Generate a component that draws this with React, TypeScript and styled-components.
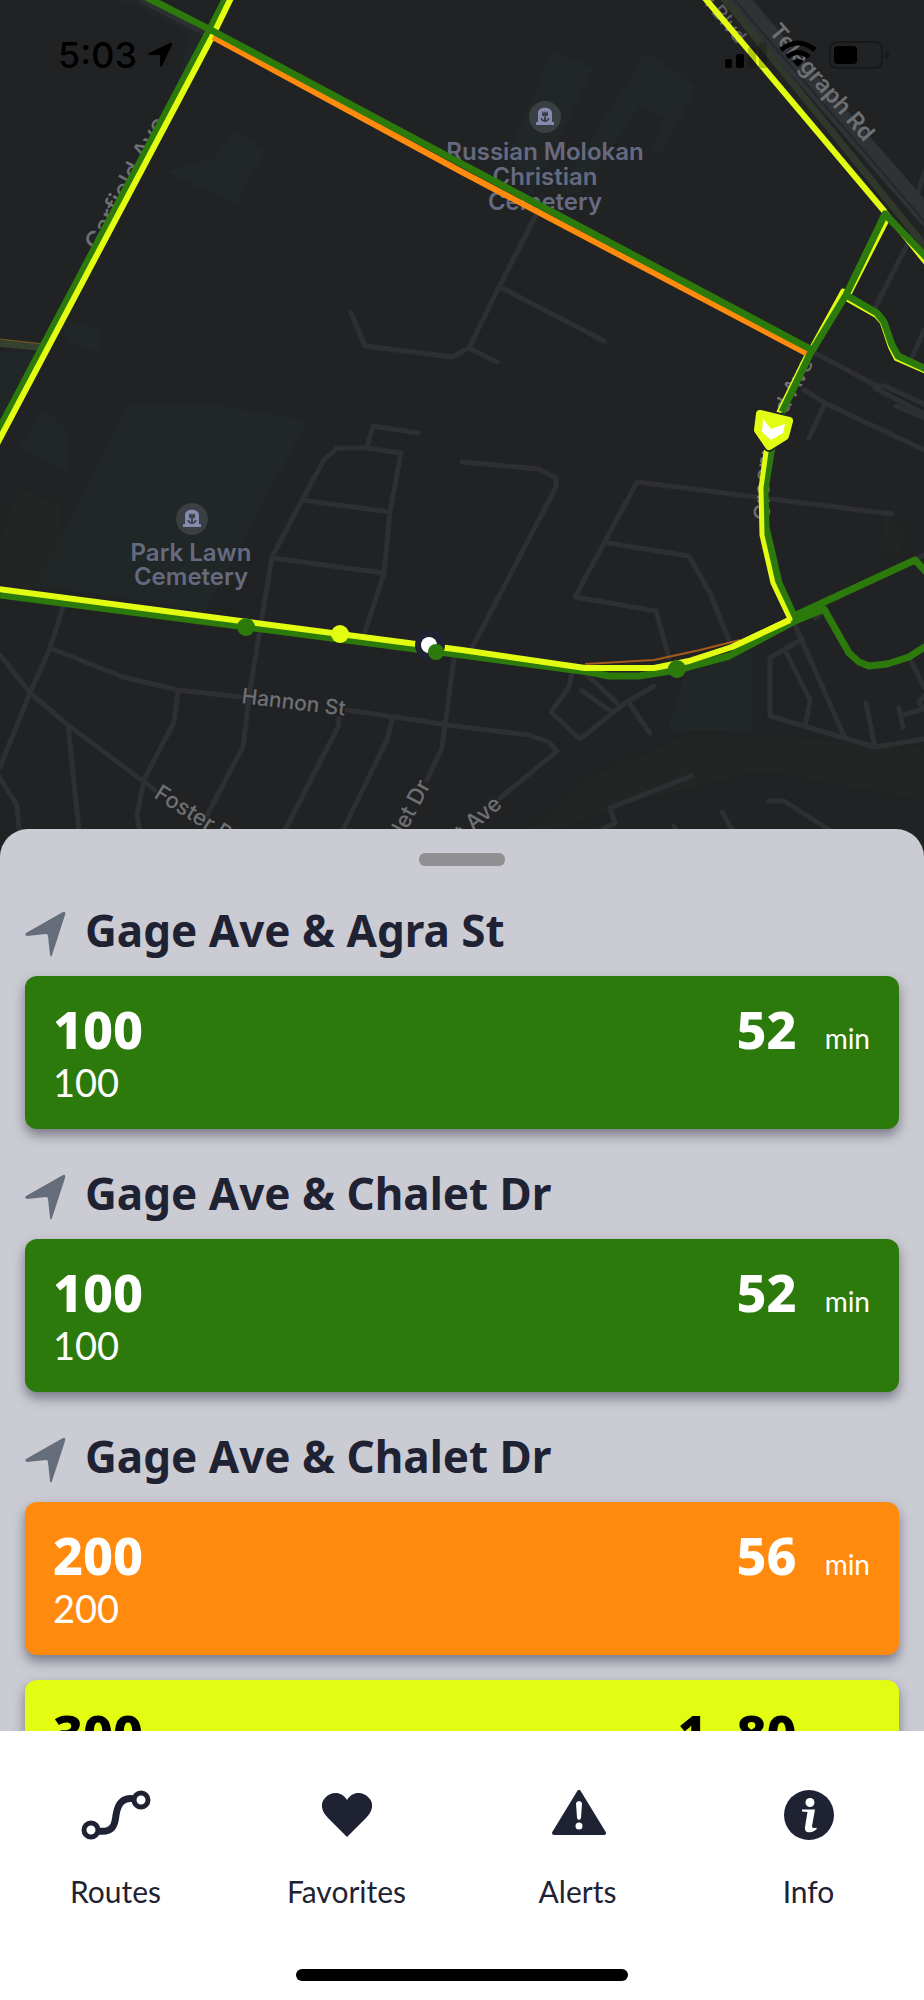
import React from "react";
import styled, { createGlobalStyle } from "styled-components";

const color = {
  ink: "#1f2233",
  sheet: "#cbcbd3",
  green: "#2d7a0c",
  orange: "#ff8a0d",
  yellow: "#e2fd12",
  arrow: "#666d7a",
};

const heavyFont = `"Noto Sans", Lato, sans-serif`;

const GlobalStyle = createGlobalStyle`
  *, *::before, *::after { box-sizing: border-box; }
  body { margin: 0; background: #212224; }
  button { font: inherit; color: inherit; border: 0; background: none; cursor: pointer; }
`;

const Screen = styled.div`
  display: flex;
  flex-direction: column;
  height: 100vh;
  font-family: Lato, "Liberation Sans", sans-serif;
  color: ${color.ink};
`;

const Stage = styled.main`
  position: relative;
  flex: 1;
  min-height: 0;
  display: grid;
  grid-template-rows: minmax(0, 829fr) minmax(0, 902fr);
`;

const MapLayer = styled.svg`
  position: absolute;
  top: 0;
  left: 0;
  width: 100%;
  height: 50%;
  background: #212224;
  font-family: Inter, Roboto, sans-serif;
`;

const StatusBar = styled.header`
  position: relative;
  display: flex;
  justify-content: space-between;
  align-items: flex-start;
  padding: 34px 34px 0 58px;
  color: #000;
`;

const StatusGroup = styled.div`
  display: flex;
  align-items: center;
  gap: 10px;
  height: 42px;
`;

const Clock = styled.time`
  font-family: Inter, Roboto, sans-serif;
  font-size: 36px;
  font-weight: 500;
  line-height: 42px;
`;

const Sheet = styled.section`
  position: relative;
  overflow: hidden;
  padding: 24px 25px 0;
  background: ${color.sheet};
  border-radius: 28px 28px 0 0;
`;

const Handle = styled.button`
  display: block;
  width: 86px;
  height: 13px;
  margin: 0 auto;
  padding: 0;
  && { background: #909093; }
  border-radius: 6px;
`;

const StopHeading = styled.header`
  display: flex;
  align-items: flex-end;
  gap: 19px;
  margin: 37px 0 19px;
`;

const StopName = styled.h2`
  margin: 0;
  font-family: ${heavyFont};
  font-size: 44px;
  font-weight: 700;
  line-height: 54px;
`;

const CardList = styled.div`
  display: grid;
  gap: 25px;
`;

const Card = styled.button<{ $fill: string; $text: string }>`
  display: block;
  width: 100%;
  padding: 23px 29px 24px 28px;
  text-align: left;
  border-radius: 12px;
  && {
    background: ${(p) => p.$fill};
    color: ${(p) => p.$text};
  }
  box-shadow: 0 6px 12px rgba(40, 42, 60, 0.5);
`;

const CardTop = styled.span`
  display: flex;
  align-items: baseline;
  justify-content: space-between;
`;

const Big = styled.span`
  font-family: ${heavyFont};
  font-size: 52px;
  font-weight: 800;
  line-height: 60px;
`;

const Eta = styled.span`
  display: flex;
  align-items: baseline;
  gap: 28px;
`;

const Unit = styled.span`
  font-size: 28px;
  line-height: 36px;
`;

const Headsign = styled.span`
  display: block;
  font-size: 38px;
  line-height: 46px;
`;

const BottomBar = styled.footer`
  position: relative;
  padding: 59px 0 19px;
  background: #fff;
`;

const Tabs = styled.nav`
  display: grid;
  grid-template-columns: repeat(4, 1fr);
`;

const Tab = styled.button`
  display: flex;
  flex-direction: column;
  align-items: center;
  gap: 33px;
  padding: 0;
`;

const TabLabel = styled.span`
  font-size: 30px;
  line-height: 36px;
`;

const HomeIndicator = styled.div`
  width: 36%;
  height: 12px;
  margin: 60px auto 0;
  border-radius: 6px;
  background: #000;
`;

const PARKS = [
  "M128 402L210 404L175 604L36 586Z",
  "M210 404L308 420L205 612L120 598Z",
  "M0 352L36 353L10 400L0 420Z",
  "M20 448L42 408L68 432L67 472Z",
  "M165 172L214 158L232 130L266 150L236 204Z",
  "M120 0L145 0L206 34L172 100L190 34Z",
  "M60 318L102 330L97 352L66 342Z",
  "M552 50L594 68L530 195L510 150Z",
  "M645 53L666 64L696 88L662 154L652 150L664 116L640 106L580 195L560 190Z",
  "M690 655L753 652L753 730L668 730Z",
];

const GROUNDS = [
  "M520 840L590 778L690 735L780 736L924 750V800L760 770L640 800Z",
  "M20 490L60 505L64 590L0 584V540Z",
  "M885 516L905 530L900 556L878 550Z",
];

const ROADS = [
  "M351 313L365 346L452 357L469 348L499 287L537 213",
  "M500 287L604 341M469 348L497 362",
  "M815 353L877 386L885 386L924 404M875 388L924 414",
  "M804 390L825 403L924 450M825 403L809 438M896 406L924 418",
  "M912 235L875 308M924 330L912 358",
  "M418 433L373 426L367 447",
  "M365 632L384 573L390 512L401 453L367 448H337L324 460L302 500L272 557L250 690L243 747L207 815",
  "M302 500L390 512M272 558L384 573",
  "M63 607L50 648L30 693L0 767",
  "M50 648L123 677L178 690L240 697M347 710L462 727L529 735L549 742L557 751L500 798",
  "M0 655L30 693L68 725L155 790M68 725L80 840M0 778L17 805L20 840",
  "M178 692L174 722L144 780L137 815L141 840",
  "M339 718L338 727L280 840M392 720L387 740L338 840M454 658L442 748L427 780",
  "M462 462L539 469L556 478V487L472 648",
  "M892 514L637 482L575 597L656 611L669 658",
  "M608 543L689 556L710 593L730 643",
  "M572 673L569 687L551 712L580 739L625 703L654 686",
  "M587 675L617 703M582 691L612 712M629 703L650 733",
  "M795 625L845 738M802 639L770 658V716L875 747L924 739",
  "M785 650L810 700L805 727M866 703L875 747",
  "M899 708L903 727M903 715L924 709L919 702L924 696M909 657L924 687",
  "M691 776L610 808L615 823L590 836",
  "M769 801H784L845 840M722 812L738 840M674 826L680 840",
  "M750 0L867 140L917 197L924 205M917 197L924 173",
  "M826 610L815 618M915 560L924 555",
];

const Cemetery = ({ x, y }: { x: number; y: number }) => (
  <g transform={`translate(${x} ${y})`}>
    <circle r="16" fill="#3b3f43" />
    <path d="M-9 8V5H-7V-4C-7 -11 7 -11 7 -4V5H9V8Z" fill="#858aae" />
    <path
      d="M-3 -6L-1 -4L0 -6L1 -4L3 -6V-2C3 0 -3 0 -3 -2ZM-1 0H1V5H-1Z"
      fill="#3b3f43"
    />
    <path d="M-4 1C-3 4 -1 4 0 4C1 4 3 4 4 1" fill="none" stroke="#3b3f43" strokeWidth="1.5" />
  </g>
);

const TransitMap = () => (
  <MapLayer viewBox="0 0 924 866" preserveAspectRatio="xMidYMin slice" role="img" aria-label="Transit map">
    {GROUNDS.map((d) => (
      <path key={d} d={d} fill="#222524" />
    ))}
    {PARKS.map((d) => (
      <path key={d} d={d} fill="#212626" />
    ))}
    <g fill="none" stroke="#2e2f33" strokeWidth="5" strokeLinecap="round" strokeLinejoin="round">
      {ROADS.map((d) => (
        <path key={d} d={d} />
      ))}
    </g>
    <g fill="none">
      <path d="M735 -4L930 220" stroke="#2f3336" strokeWidth="19" />
      <path d="M731 -4L930 228" stroke="#25272c" strokeWidth="2" />
      <path d="M722 -4L928 250" stroke="#2f382a" strokeWidth="7" />
      <path d="M140 0L208 35" stroke="#2e2f33" strokeWidth="5" />
      <path d="M0 343L42 347" stroke="#35402f" strokeWidth="8" />
      <path d="M0 339L42 344" stroke="#7a5422" strokeWidth="1" />
    </g>

    <g fill="#6e7073" fontSize="22" fontWeight="500">
      <text fontSize="23" fontWeight="600" transform="translate(768 32) rotate(49)">Telegraph Rd</text>
      <text fill="#5c5f62" fontSize="20" transform="translate(704 4) rotate(51)">l Blvd</text>
      <text fontSize="25" transform="translate(99 252) rotate(-62)">Garfield Ave</text>
      <text fontSize="21" transform="translate(241 703) rotate(7)">Hannon St</text>
      <text transform="translate(153 797) rotate(32)">Foster Rd</text>
      <text textAnchor="end" transform="translate(431 785) rotate(-62)">let Dr</text>
      <text textAnchor="end" transform="translate(503 806) rotate(-41)">t Ave</text>
      <path id="greenwood" d="M770 520L769 480L778 430L822 348" fill="none" />
      <text fontSize="22">
        <textPath href="#greenwood">Greenwood Ave</textPath>
      </text>
    </g>
    <g fill="#666a80" fontSize="24" fontWeight="600" textAnchor="middle">
      <text x="545" y="160">Russian Molokan</text>
      <text x="545" y="185">Christian</text>
      <text x="545" y="210">Cemetery</text>
      <text x="191" y="561">Park Lawn</text>
      <text x="191" y="585">Cemetery</text>
    </g>
    <Cemetery x={545} y={117} />
    <Cemetery x={192} y={519} />

    <g fill="none" strokeLinejoin="round">
      <g stroke={color.green} strokeWidth="7">
        <path d="M227 -4L209 31L-5 437" />
        <path d="M0 595L462 655L589 672L609 676H639L677 670L729 656L795 621L824 609L849 653L859 662L869 666L887 664L909 657L926 646" />
        <path d="M930 576L915 560L794 616L779 583L766 527L765 490L771 452L782 412" />
      </g>
      <path d="M585 664L654 660L700 650L740 640" stroke="#a45a1c" strokeWidth="2" />
      <path d="M232 -4L212 37L-3 444" stroke={color.yellow} strokeWidth="6" />
      <path
        d="M-2 589L462 650L585 668H654L689 661L732 647L790 620"
        stroke={color.yellow}
        strokeWidth="6"
      />
      <path
        d="M732 647L790 619L773 583L762 535L761 488L766 452L779 412L808 353"
        stroke={color.yellow}
        strokeWidth="5"
      />
      <path d="M703 -4L885 212" stroke={color.yellow} strokeWidth="6" />
      <path d="M885 212L926 263" stroke={color.yellow} strokeWidth="5" />
      <path d="M889 216L849 294L843 291L809 353" stroke={color.yellow} strokeWidth="5" />
      <path d="M846 299L876 316L882 323L890 347L896 359L926 372" stroke={color.yellow} strokeWidth="4" />
      <path d="M213 37L462 172L808 354" stroke={color.orange} strokeWidth="6" />
      <g stroke={color.green} strokeWidth="7">
        <path d="M144 -4L211 30L462 164L812 350L782 412" />
        <path d="M812 351L846 295L885 214L928 259" />
        <path d="M846 295L877 313L884 322L892 345L898 356L926 369" />
      </g>
    </g>

    <circle cx="246" cy="627" r="9" fill={color.green} />
    <circle cx="340" cy="634" r="9" fill={color.yellow} />
    <circle cx="430" cy="645" r="15" fill={color.ink} />
    <circle cx="429" cy="645" r="8" fill="#fff" />
    <circle cx="436" cy="652" r="8" fill={color.green} />
    <circle cx="677" cy="669" r="9" fill={color.green} />
    <g strokeLinejoin="round">
      <path
        d="M760 414L789 421L785 436L769 446L758 430Z"
        fill={color.yellow}
        stroke="#212224"
        strokeWidth="12"
      />
      <path
        d="M760 414L789 421L785 436L769 446L758 430Z"
        fill={color.yellow}
        stroke={color.yellow}
        strokeWidth="8"
      />
      <path d="M763 419L771 429L785 424L783 433L771 440L762 432Z" fill="#fff" />
    </g>
  </MapLayer>
);

const LocationGlyph = () => (
  <svg width="26" height="26" viewBox="0 0 26 26" aria-hidden="true">
    <path d="M23 1Q26 0 25 3L15 24Q13 26 13 23V13H3Q0 13 2 11Z" fill="#000" />
  </svg>
);

const StatusIcons = () => (
  <svg width="166" height="30" viewBox="0 0 166 30" role="img" aria-label="Signal, Wi-Fi, battery">
    <rect x="1" y="19" width="7" height="9" rx="2" />
    <rect x="12" y="14" width="8" height="14" rx="2" />
    <rect x="24" y="7" width="8" height="21" rx="2" opacity="0.2" />
    <rect x="35" y="2" width="8" height="26" rx="2" opacity="0.2" />
    <g fill="none" stroke="#000" strokeWidth="5">
      <path d="M57 10Q74 -4 91 10" />
      <path d="M63 17Q74 8 85 17" />
    </g>
    <path d="M68 21Q74 17 80 21L74 27Z" />
    <rect x="106" y="2" width="52" height="26" rx="7" fill="none" stroke="#17181a" strokeWidth="2" />
    <rect x="110" y="6" width="23" height="18" rx="4" />
    <path d="M161 11Q165 12 165 15Q165 18 161 19Z" fill="#17181a" />
  </svg>
);

const StopArrow = () => (
  <svg width="41" height="45" viewBox="0 0 41 45" aria-hidden="true">
    <path d="M38 0Q41 -1 40 3L27 43Q26 46 25 43L23 24Q23 22 21 22L2 24Q-1 23 1 21Z" fill={color.arrow} />
  </svg>
);

const tabIcons: Record<string, React.ReactNode> = {
  Routes: (
    <g fill="none" stroke={color.ink}>
      <circle cx="10" cy="40" r="7" strokeWidth="5" />
      <circle cx="60" cy="10" r="7" strokeWidth="5" />
      <path d="M17 41C32 43 34 35 35 25C37 12 43 7 54 9" strokeWidth="7" />
    </g>
  ),
  Favorites: (
    <path d="M35 47L16 28C9 21 8 13 13 8C19 1 30 1 35 10C40 1 51 1 57 8C62 13 61 21 54 28Z" fill={color.ink} />
  ),
  Alerts: (
    <>
      <path d="M36 2L61 43H11Z" fill={color.ink} stroke={color.ink} strokeWidth="4" strokeLinejoin="round" />
      <path d="M33 13Q36 9 39 13L38 28Q36 32 34 28Z" fill="#fff" />
      <circle cx="36" cy="36" r="3.5" fill="#fff" />
    </>
  ),
  Info: (
    <>
      <circle cx="35" cy="25" r="25" fill={color.ink} />
      <circle cx="36" cy="12.5" r="4.5" fill="#fff" />
      <path d="M28 19.5H41L38 36Q37.6 39 42.5 37.5V39.5Q38 43 33 42Q30.5 41 31 37L33.5 22L28 21.5Z" fill="#fff" />
    </>
  ),
};

type Arrival = { route: string; headsign: string; eta: string; fill: string; text: string };

const stops: { name: string; arrivals: Arrival[] }[] = [
  {
    name: "Gage Ave & Agra St",
    arrivals: [{ route: "100", headsign: "100", eta: "52", fill: color.green, text: "#fff" }],
  },
  {
    name: "Gage Ave & Chalet Dr",
    arrivals: [{ route: "100", headsign: "100", eta: "52", fill: color.green, text: "#fff" }],
  },
  {
    name: "Gage Ave & Chalet Dr",
    arrivals: [
      { route: "200", headsign: "200", eta: "56", fill: color.orange, text: "#fff" },
      { route: "300", headsign: "300", eta: "1, 80", fill: color.yellow, text: "#000" },
    ],
  },
];

const ArrivalCard = ({ arrival }: { arrival: Arrival }) => (
  <Card type="button" $fill={arrival.fill} $text={arrival.text}>
    <CardTop>
      <Big>{arrival.route}</Big>
      <Eta>
        <Big>{arrival.eta}</Big>
        <Unit>min</Unit>
      </Eta>
    </CardTop>
    <Headsign>{arrival.headsign}</Headsign>
  </Card>
);

export default function App() {
  return (
    <Screen>
      <GlobalStyle />
      <Stage>
        <TransitMap />
        <StatusBar>
          <StatusGroup>
            <Clock>5:03</Clock>
            <LocationGlyph />
          </StatusGroup>
          <StatusGroup>
            <StatusIcons />
          </StatusGroup>
        </StatusBar>
        <Sheet aria-label="Nearby stops">
          <Handle type="button" aria-label="Resize panel" />
          {stops.map((stop, i) => (
            <section key={i}>
              <StopHeading>
                <StopArrow />
                <StopName>{stop.name}</StopName>
              </StopHeading>
              <CardList>
                {stop.arrivals.map((a) => (
                  <ArrivalCard key={a.route} arrival={a} />
                ))}
              </CardList>
            </section>
          ))}
        </Sheet>
      </Stage>
      <BottomBar>
        <Tabs aria-label="Main">
          {Object.entries(tabIcons).map(([label, icon]) => (
            <Tab key={label} type="button">
              <svg width="70" height="50" viewBox="0 0 70 50" aria-hidden="true">
                {icon}
              </svg>
              <TabLabel>{label}</TabLabel>
            </Tab>
          ))}
        </Tabs>
        <HomeIndicator />
      </BottomBar>
    </Screen>
  );
}
